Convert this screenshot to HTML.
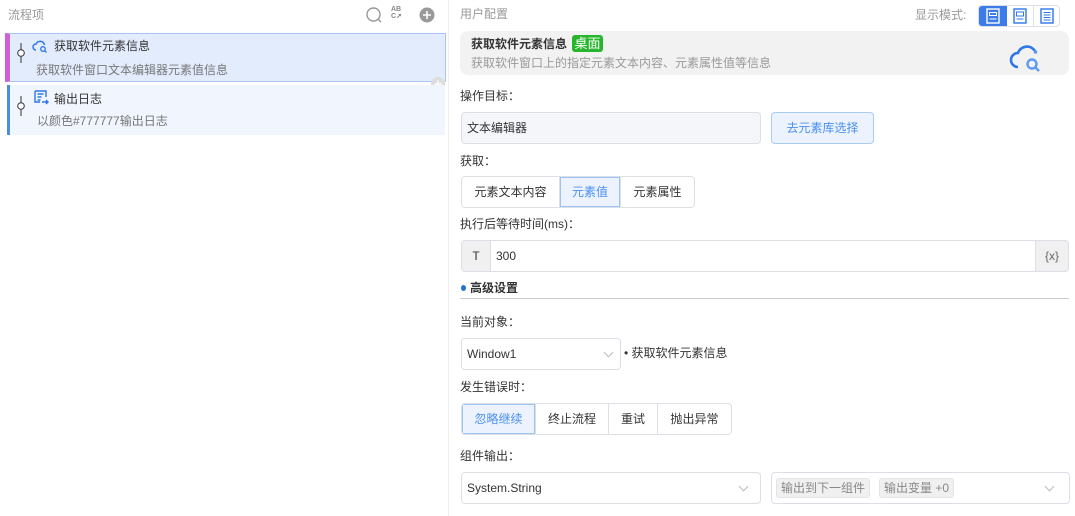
<!DOCTYPE html>
<html><head><meta charset="utf-8"><style>
*{margin:0;padding:0;box-sizing:border-box}
body{width:1075px;height:516px;background:#fff;position:relative;overflow:hidden;font-family:"Liberation Sans","Noto Sans CJK SC",sans-serif;font-size:12px;line-height:16px;color:#333}
.a{position:absolute;white-space:nowrap}
.g{color:#999}
.box{position:absolute;border:1px solid #dcdfe6;border-radius:4px;background:#fff}
.seg{position:absolute;display:flex;border:1px solid #dcdfe6;border-radius:4px;overflow:hidden;background:#fff}
.seg div{display:flex;align-items:center;justify-content:center;border-right:1px solid #dcdfe6;height:100%}
.seg div:last-child{border-right:none}
.seg .on{background:#ecf3fe;color:#4a8ff0;box-shadow:inset 0 0 0 1px #9cc4f5}
.chev{position:absolute;width:7px;height:7px;border-right:1px solid #bbb;border-bottom:1px solid #bbb;transform:rotate(45deg)}
.tag{position:absolute;background:#f0f0f0;border:1px solid #e4e4e4;border-radius:3px;color:#888;font-size:12px;height:20px;line-height:18px;padding:0 4px}
</style></head><body>
<div class="a g" style="left:8px;top:7px">流程项</div>
<svg class="a" style="left:366px;top:7px" width="16" height="16"><circle cx="7.5" cy="7.5" r="6.5" fill="none" stroke="#999" stroke-width="1.4"/><line x1="12" y1="12" x2="15" y2="15" stroke="#999" stroke-width="1.4"/></svg>
<div class="a" style="left:391px;top:6px;font-size:7px;color:#888;font-weight:bold;line-height:7px">AB<br>C<span style="color:#888">➚</span></div>
<svg class="a" style="left:419px;top:7px" width="16" height="16"><circle cx="8" cy="8" r="7.5" fill="#999"/><path d="M8 4v8M4 8h8" stroke="#fff" stroke-width="1.6"/></svg>
<div class="a" style="left:5px;top:33px;width:441px;height:49px;background:#e3ecfd;border:1px solid #a9c4f5;border-left:5px solid #d15fd9"></div>
<svg class="a" style="left:16px;top:43px" width="10" height="20"><line x1="5" y1="0" x2="5" y2="20" stroke="#333"/><circle cx="5" cy="10" r="3.3" fill="#fff" stroke="#333"/></svg>
<svg class="a" style="left:32px;top:39px" width="16" height="14"><path d="M4 11a3 3 0 0 1 0-6 4.5 4.5 0 0 1 8.5 1" fill="none" stroke="#2f76e8" stroke-width="1.5"/><circle cx="11" cy="10" r="2.3" fill="none" stroke="#2f76e8" stroke-width="1.3"/><line x1="12.6" y1="11.7" x2="14.5" y2="13.5" stroke="#2f76e8" stroke-width="1.3"/></svg>
<div class="a" style="left:54px;top:38px">获取软件元素信息</div>
<div class="a" style="left:36px;top:62px;color:#777">获取软件窗口文本编辑器元素值信息</div>
<svg class="a" style="left:431px;top:77px" width="14" height="14"><circle cx="7" cy="7" r="7" fill="#ddd"/><path d="M7 3.5v7M3.5 7h7" stroke="#fff" stroke-width="1.5"/></svg>
<div class="a" style="left:7px;top:85px;width:438px;height:50px;background:#f0f5fe;border-left:3px solid #4a90d9"></div>
<svg class="a" style="left:16px;top:96px" width="10" height="20"><line x1="5" y1="0" x2="5" y2="20" stroke="#333"/><circle cx="5" cy="10" r="3.3" fill="#fff" stroke="#333"/></svg>
<svg class="a" style="left:34px;top:90px" width="15" height="16"><path d="M1 1h11v6M1 1v11h5M3.5 4h6M3.5 7h4M3.5 10h3M8 12h6M12 10l2 2-2 2" fill="none" stroke="#2f76e8" stroke-width="1.4"/></svg>
<div class="a" style="left:54px;top:91px">输出日志</div>
<div class="a" style="left:37px;top:113px;color:#777">以颜色#777777输出日志</div>
<div class="a" style="left:448px;top:0;width:1px;height:516px;background:#eee"></div>

<div class="a g" style="left:460px;top:6px">用户配置</div>
<div class="a g" style="left:915px;top:7px">显示模式:</div>
<div class="a" style="left:978px;top:5px;width:82px;height:22px;border:1px solid #dcdfe6;border-radius:4px;display:flex;overflow:hidden">
<div style="width:28px;background:#3b7bea;display:flex;align-items:center;justify-content:center"><svg width="14" height="16"><rect x="1" y="1" width="12" height="14" fill="none" stroke="#fff" stroke-width="1.4"/><path d="M3.5 4.5h7v3h-7zM3.5 11h7" fill="none" stroke="#fff"/></svg></div>
<div style="width:27px;border-right:1px solid #dcdfe6;display:flex;align-items:center;justify-content:center"><svg width="14" height="16"><rect x="1" y="1" width="12" height="14" fill="none" stroke="#2f76e8" stroke-width="1.4"/><path d="M3.5 4h7v4h-7zM3.5 11h7" fill="none" stroke="#2f76e8"/></svg></div>
<div style="flex:1;display:flex;align-items:center;justify-content:center"><svg width="14" height="16"><rect x="1" y="1" width="12" height="14" fill="none" stroke="#2f76e8" stroke-width="1.4"/><path d="M3.5 4.5h7M3.5 7h7M3.5 9.5h7M3.5 12h7" stroke="#2f76e8"/></svg></div></div>
<div class="a" style="left:460px;top:31px;width:609px;height:44px;background:#f2f2f2;border-radius:8px"></div>
<div class="a" style="left:471px;top:36px;font-weight:bold">获取软件元素信息</div>
<div class="a" style="left:572px;top:35px;width:31px;height:17px;background:#27b52e;color:#fff;border-radius:3px;text-align:center;line-height:17px;font-size:13px">桌面</div>
<div class="a g" style="left:471px;top:55px">获取软件窗口上的指定元素文本内容、元素属性值等信息</div>
<svg class="a" style="left:1008px;top:43px" width="36" height="30"><path d="M10 24a7 7 0 0 1 0-14 9.5 9.5 0 0 1 17-2" fill="none" stroke="#2f76e8" stroke-width="2.6"/><circle cx="27.5" cy="9" r="1.8" fill="#5d9af0"/><circle cx="24" cy="21" r="4.5" fill="none" stroke="#5d9af0" stroke-width="2.4"/><line x1="27.5" y1="24.5" x2="31" y2="28" stroke="#5d9af0" stroke-width="2.4"/></svg>

<div class="a" style="left:460px;top:88px">操作目标：</div>
<div class="box" style="left:461px;top:112px;width:300px;height:32px;background:#f5f6fa"></div>
<div class="a" style="left:467px;top:120px">文本编辑器</div>
<div class="box" style="left:771px;top:112px;width:103px;height:32px;background:#ecf3fe;border-color:#a8ccf5;color:#4a8ff0;text-align:center;line-height:30px">去元素库选择</div>

<div class="a" style="left:460px;top:153px">获取：</div>
<div class="seg" style="left:461px;top:176px;height:32px"><div style="width:98px">元素文本内容</div><div class="on" style="width:61px">元素值</div><div style="width:73px">元素属性</div></div>

<div class="a" style="left:460px;top:216px">执行后等待时间(ms)：</div>
<div class="box" style="left:461px;top:240px;width:608px;height:32px;overflow:hidden">
<div class="a" style="left:0;top:0;width:29px;height:30px;background:#f0f0f0;border-right:1px solid #dcdfe6;text-align:center;line-height:30px">T</div>
<div class="a" style="left:34px;top:0;line-height:30px">300</div>
<div class="a" style="right:0;top:0;width:33px;height:30px;background:#f0f0f0;border-left:1px solid #dcdfe6;text-align:center;line-height:30px;font-size:12px;color:#666">{x}</div></div>

<div class="a" style="left:461px;top:285px;width:5px;height:6px;border-radius:50%;background:#1e6fe0"></div>
<div class="a" style="left:470px;top:280px;font-weight:bold">高级设置</div>
<div class="a" style="left:460px;top:298px;width:609px;height:1px;background:#ccc"></div>

<div class="a" style="left:460px;top:314px">当前对象：</div>
<div class="box" style="left:461px;top:338px;width:160px;height:32px"></div>
<div class="a" style="left:467px;top:346px">Window1</div>
<div class="chev" style="left:605px;top:349px"></div>
<div class="a" style="left:624px;top:345px">• 获取软件元素信息</div>

<div class="a" style="left:460px;top:379px">发生错误时：</div>
<div class="seg" style="left:461px;top:403px;height:32px"><div class="on" style="width:74px">忽略继续</div><div style="width:73px">终止流程</div><div style="width:49px">重试</div><div style="width:73px">抛出异常</div></div>

<div class="a" style="left:460px;top:448px">组件输出：</div>
<div class="box" style="left:461px;top:472px;width:300px;height:32px"></div>
<div class="a" style="left:467px;top:480px">System.String</div>
<div class="chev" style="left:740px;top:483px"></div>
<div class="box" style="left:771px;top:472px;width:299px;height:32px"></div>
<div class="tag" style="left:776px;top:478px">输出到下一组件</div>
<div class="tag" style="left:879px;top:478px">输出变量 +0</div>
<div class="chev" style="left:1046px;top:483px"></div>
</body></html>
